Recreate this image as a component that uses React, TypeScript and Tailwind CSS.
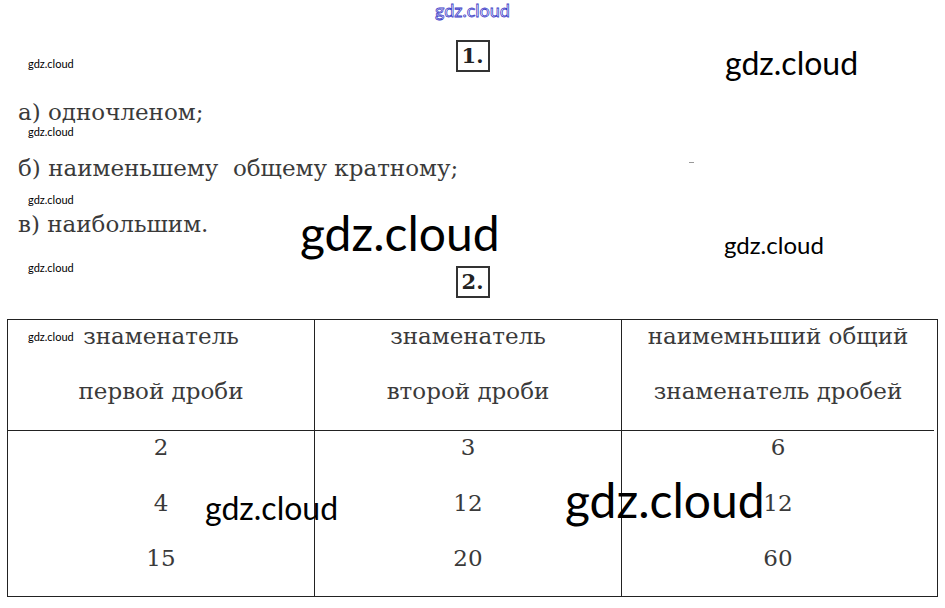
const serif = "font-['DejaVu_Serif','Liberation_Serif',serif]";
const mark = "absolute whitespace-nowrap leading-none font-['Lato','Open_Sans',sans-serif]";

function NumBox({ n }: { n: string }) {
  return (
    <div
      className={`mx-auto flex h-[32px] w-[34px] items-center justify-center border-2 border-[#333] text-[21px] font-bold text-[#222] ${serif}`}
    >
      {n}
    </div>
  );
}

const rows = [
  ["2", "3", "6"],
  ["4", "12", "12"],
  ["15", "20", "60"],
];

const heads = [
  ["знаменатель", "первой дроби"],
  ["знаменатель", "второй дроби"],
  ["наимемньший общий", "знаменатель дробей"],
];

export default function App() {
  return (
    <div className={`relative h-[608px] w-[945px] overflow-hidden bg-white text-[#3a3a3a] ${serif}`}>
      <div className="pt-[40px]">
        <NumBox n="1." />
      </div>

      <div className="mt-[12px] pl-[18px] text-[23px]">
        <div className="h-[56px] leading-[56px]">а) одночленом;</div>
        <div className="h-[56px] leading-[56px] whitespace-pre">б) наименьшему  общему кратному;</div>
        <div className="h-[56px] leading-[56px]">в) наибольшим.</div>
      </div>

      <div className="mt-[14px]">
        <NumBox n="2." />
      </div>

      <div className="mx-[7px] mt-[21px] grid grid-cols-[307px_307px_312px] border border-[#222] text-[23px]">
        {heads.map((h, i) => (
          <div
            key={i}
            className={`flex h-[111px] flex-col gap-[22px] border-b border-[#222] text-center ${i < 2 ? "border-r" : ""}`}
          >
            <div className="h-[33px] leading-[33px]">{h[0]}</div>
            <div className="h-[33px] leading-[33px]">{h[1]}</div>
          </div>
        ))}
        {[0, 1, 2].map((c) => (
          <div
            key={c}
            className={`flex h-[165px] flex-col gap-[22.5px] text-center ${c < 2 ? "border-r border-[#222]" : ""}`}
          >
            {rows.map((r, j) => (
              <div key={j} className="h-[33px] leading-[33px]">
                {r[c]}
              </div>
            ))}
          </div>
        ))}
      </div>

      <div className="absolute left-[689px] top-[162px] h-px w-[5px] bg-[#999]" />

      {/* водяные знаки */}
      <div className={`${mark} left-[435px] top-[1px] text-[18px] text-transparent [-webkit-text-stroke:0.8px_#3c3cc8]`}>
        gdz.cloud
      </div>
      <div className={`${mark} left-[28px] top-[58px] text-[11px] text-black`}>gdz.cloud</div>
      <div className={`${mark} left-[725px] top-[47px] text-[32px] text-black`}>gdz.cloud</div>
      <div className={`${mark} left-[28px] top-[126px] text-[11px] text-black`}>gdz.cloud</div>
      <div className={`${mark} left-[28px] top-[194px] text-[11px] text-black`}>gdz.cloud</div>
      <div className={`${mark} left-[300px] top-[209px] text-[48px] text-black`}>gdz.cloud</div>
      <div className={`${mark} left-[724px] top-[233px] text-[24px] text-black`}>gdz.cloud</div>
      <div className={`${mark} left-[28px] top-[262px] text-[11px] text-black`}>gdz.cloud</div>
      <div className={`${mark} left-[28px] top-[331px] text-[11px] text-black`}>gdz.cloud</div>
      <div className={`${mark} left-[205px] top-[492px] text-[32px] text-black`}>gdz.cloud</div>
      <div className={`${mark} left-[565px] top-[476px] text-[48px] text-black`}>gdz.cloud</div>
    </div>
  );
}
